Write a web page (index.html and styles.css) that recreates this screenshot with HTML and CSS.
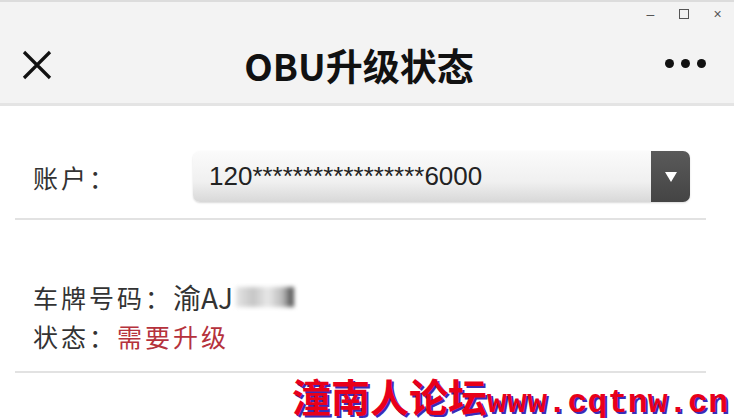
FILE: index.html
```html
<!DOCTYPE html>
<html lang="zh-CN">
  <head>
    <meta charset="UTF-8" />
    <meta name="viewport" content="width=device-width, initial-scale=1.0" />
    <title>OBU升级状态</title>
    <link rel="stylesheet" href="styles.css">
  </head>
  <body>
    <div class="topbar">
      <div class="win-controls">
        <span class="win-btn">&#8211;</span>
        <span class="win-btn box"></span>
        <span class="win-btn">&#215;</span>
      </div>
      <div class="nav">
        <svg class="nav-close" width="30" height="30" viewBox="0 0 30 30">
          <path d="M2 2 L28 28 M28 2 L2 28" stroke="#111" stroke-width="3.2" fill="none" />
        </svg>
        <h1 class="nav-title">OBU升级状态</h1>
        <div class="nav-more">
          <span></span><span></span><span></span>
        </div>
      </div>
    </div>

    <div class="content">
      <div class="row account">
        <label class="label">账户：</label>
        <div class="select">
          <span class="select-value">120*****************6000</span>
          <span class="select-arrow">
            <svg width="14" height="12" viewBox="0 0 14 12">
              <path d="M1 1 L13 1 L7 11 Z" fill="#fff" />
            </svg>
          </span>
        </div>
      </div>

      <div class="info">
        <div class="info-line">车牌号码：<span class="plate">渝AJ</span><span class="blur"></span></div>
        <div class="info-line">状态：<span class="status">需要升级</span></div>
      </div>
    </div>

    <div class="watermark">潼南人论坛<span class="wm-url">www.cqtnw.cn</span></div>
  </body>
</html>
```

FILE: styles.css
```css
body {
  margin: 0;
  width: 734px;
  height: 418px;
  overflow: hidden;
  position: relative;
  background-color: #fff;
  font-family: "Noto Sans CJK SC", "Liberation Sans", sans-serif;
  color: #333;
}
.topbar {
  background-color: #f3f3f3;
  border-top: 2px solid #dcdcdc;
  border-bottom: 3px solid #e4e4e4;
}
.win-controls {
  height: 24px;
  display: flex;
  justify-content: flex-end;
  align-items: center;
  padding-right: 10px;
  gap: 20px;
}
.win-btn {
  width: 13px;
  text-align: center;
  font-family: "Liberation Sans", sans-serif;
  font-size: 14px;
  color: #555;
  line-height: 13px;
}
.win-btn.box {
  width: 8px;
  height: 8px;
  border: 1px solid #555;
  margin: 0 2px;
}
.nav {
  height: 77px;
  display: flex;
  align-items: center;
  justify-content: space-between;
  padding: 0 28px 0 22px;
  position: relative;
}
.nav-title {
  position: absolute;
  left: 0;
  right: 16px;
  text-align: center;
  margin: 0;
  font-size: 37px;
  font-weight: bold;
  color: #111;
  pointer-events: none;
}
.nav-more {
  display: flex;
  gap: 7px;
  margin-top: -2px;
}
.nav-more span {
  width: 9px;
  height: 9px;
  border-radius: 50%;
  background-color: #111;
}
.content {
  padding: 0 28px 0 15px;
}
.row {
  display: flex;
  align-items: center;
  padding: 45px 16px 16px 18px;
  border-bottom: 2px solid #e2e2e2;
}
.label {
  width: 160px;
  font-size: 25px;
  letter-spacing: 3px;
  color: #333;
}
.select {
  flex: 1;
  height: 51px;
  display: flex;
  align-items: center;
  justify-content: space-between;
  border-radius: 7px;
  background: linear-gradient(#fbfbfb, #f0f0f0 60%, #d8d8d8);
  box-shadow: 0 1px 2px rgba(0, 0, 0, 0.15);
  overflow: hidden;
}
.select-value {
  padding-left: 16px;
  font-family: "Liberation Sans", sans-serif;
  font-size: 26px;
  color: #222;
}
.select-arrow {
  width: 39px;
  height: 100%;
  display: flex;
  align-items: center;
  justify-content: center;
  background: linear-gradient(#5a5a5a, #444);
}
.info {
  padding: 57px 0 16px 18px;
  border-bottom: 2px solid #e2e2e2;
}
.info-line {
  display: flex;
  align-items: center;
  height: 39px;
  font-size: 25px;
  letter-spacing: 3px;
  color: #333;
}
.plate {
  letter-spacing: 0;
  font-size: 28px;
}
.blur {
  display: inline-block;
  width: 58px;
  height: 20px;
  margin-left: 3px;
  background: linear-gradient(90deg, #e4e4e4, #c6c6c6 30%, #e8e8e8 55%, #bbbbbb 80%, #555 97%);
  filter: blur(2px);
}
.status {
  color: #b5323c;
}
.watermark {
  position: absolute;
  left: 292px;
  top: 376px;
  font-size: 39px;
  font-weight: bold;
  color: #e8001a;
  text-shadow: 2px 2px 0 #3a2bb8;
  white-space: nowrap;
  line-height: 38px;
}
.wm-url {
  font-family: "Liberation Mono", monospace;
  font-size: 33px;
  letter-spacing: 0.3px;
}
```
